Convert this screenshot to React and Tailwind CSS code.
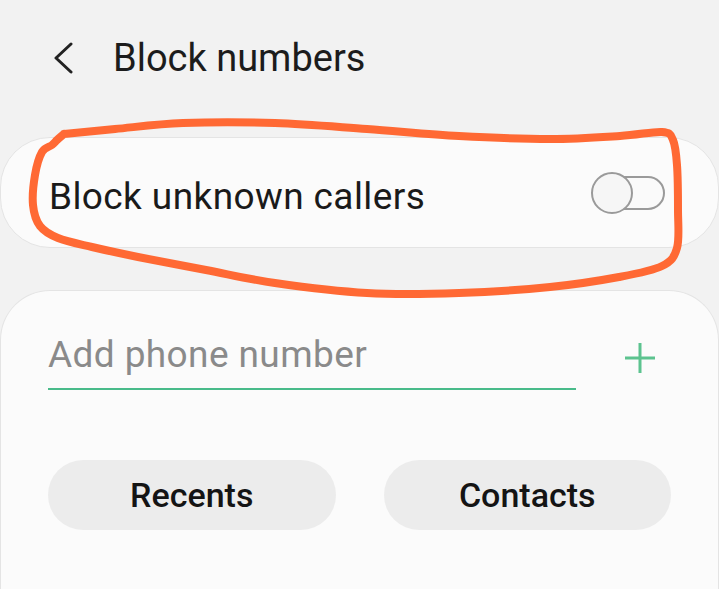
import React from "react";

// hand-drawn annotation loop, traced from the screenshot
const LOOP = [
  [64, 134], [115, 129], [183, 123], [275, 123], [367, 129], [459, 136], [550, 139],
  [620, 136], [662, 132], [673, 140], [677, 165], [678, 210], [677, 248], [662, 266],
  [619, 277], [550, 287], [459, 293], [367, 293], [275, 283], [206, 270], [138, 257],
  [92, 247], [58, 238], [40, 226], [33, 205], [35, 175], [42, 152], [52, 145], [57, 140], [64, 134],
];

function smoothPath(pts) {
  let d = `M${pts[0][0]},${pts[0][1]}`;
  for (let i = 0; i < pts.length - 1; i++) {
    const p0 = pts[i - 1] || pts[i];
    const p1 = pts[i];
    const p2 = pts[i + 1];
    const p3 = pts[i + 2] || p2;
    const c1 = [p1[0] + (p2[0] - p0[0]) / 6, p1[1] + (p2[1] - p0[1]) / 6];
    const c2 = [p2[0] - (p3[0] - p1[0]) / 6, p2[1] - (p3[1] - p1[1]) / 6];
    d += ` C${c1[0]},${c1[1]} ${c2[0]},${c2[1]} ${p2[0]},${p2[1]}`;
  }
  return d;
}

const LOOP_D = smoothPath(LOOP);

function Toggle() {
  return (
    <div className="relative w-[74px] h-[42px]">
      <div className="absolute right-0 top-[4px] w-[62px] h-[34px] rounded-full border-2 border-[#9a9a9a] bg-[#fafafa]" />
      <div className="absolute left-0 top-0 w-[42px] h-[42px] rounded-full border-2 border-[#9a9a9a] bg-[#f6f6f6]" />
    </div>
  );
}

export default function App() {
  return (
    <div
      className="relative w-[719px] h-[589px] overflow-hidden bg-[#f2f2f2] flex flex-col"
      style={{ fontFamily: "Roboto, 'Noto Sans', sans-serif" }}
    >
      {/* Header */}
      <div className="h-[116px] flex items-center pl-[52px] shrink-0">
        <svg width="22" height="32" viewBox="0 0 22 32" fill="none" className="text-[#222]">
          <path d="M19 2 L4 16 L19 30" stroke="currentColor" strokeWidth="3" strokeLinecap="round" strokeLinejoin="round" />
        </svg>
        <h1 className="ml-[39px] text-[38px] text-[#1c1c1c] leading-none">Block numbers</h1>
      </div>

      {/* Block unknown callers */}
      <div className="mt-[21px] h-[111px] shrink-0 rounded-[50px] bg-[#fbfbfb] border border-[#e4e4e4] flex items-center justify-between pl-[48px] pr-[53px]">
        <span className="mt-[8px] text-[37px] tracking-[0.4px] text-[#1a1a1a] leading-none">Block unknown callers</span>
        <Toggle />
      </div>

      {/* Add number card */}
      <div className="mt-[42px] flex-1 rounded-t-[50px] bg-[#fbfbfb] border border-b-0 border-[#e4e4e4] pl-[47px] pr-[47px] pt-[42px]">
        <div className="flex items-start">
          <div className="w-[528px] h-[57px] border-b-2 border-[#49bb8a] flex items-start">
            <span className="text-[37px] tracking-[0.4px] text-[#8a8a8a] leading-[44px]">Add phone number</span>
          </div>
          <div className="flex-1 flex justify-center pt-[8px] pl-[32px]">
            <svg width="34" height="34" viewBox="0 0 34 34" fill="none">
              <path d="M17 2 V32 M2 17 H32" stroke="#5cc38f" strokeWidth="3" />
            </svg>
          </div>
        </div>

        <div className="mt-[70px] flex gap-[48px]">
          <button className="w-[288px] h-[70px] rounded-full bg-[#ececec] text-[34px] font-medium text-[#141414]">Recents</button>
          <button className="w-[288px] h-[70px] rounded-full bg-[#ececec] text-[34px] font-medium text-[#141414]">Contacts</button>
        </div>
      </div>

      {/* annotation overlay */}
      <svg className="absolute inset-0 pointer-events-none" width="719" height="589" viewBox="0 0 719 589">
        <path d={LOOP_D} fill="none" stroke="#ff6934" strokeWidth="8" strokeLinecap="round" strokeLinejoin="round" />
      </svg>
    </div>
  );
}
